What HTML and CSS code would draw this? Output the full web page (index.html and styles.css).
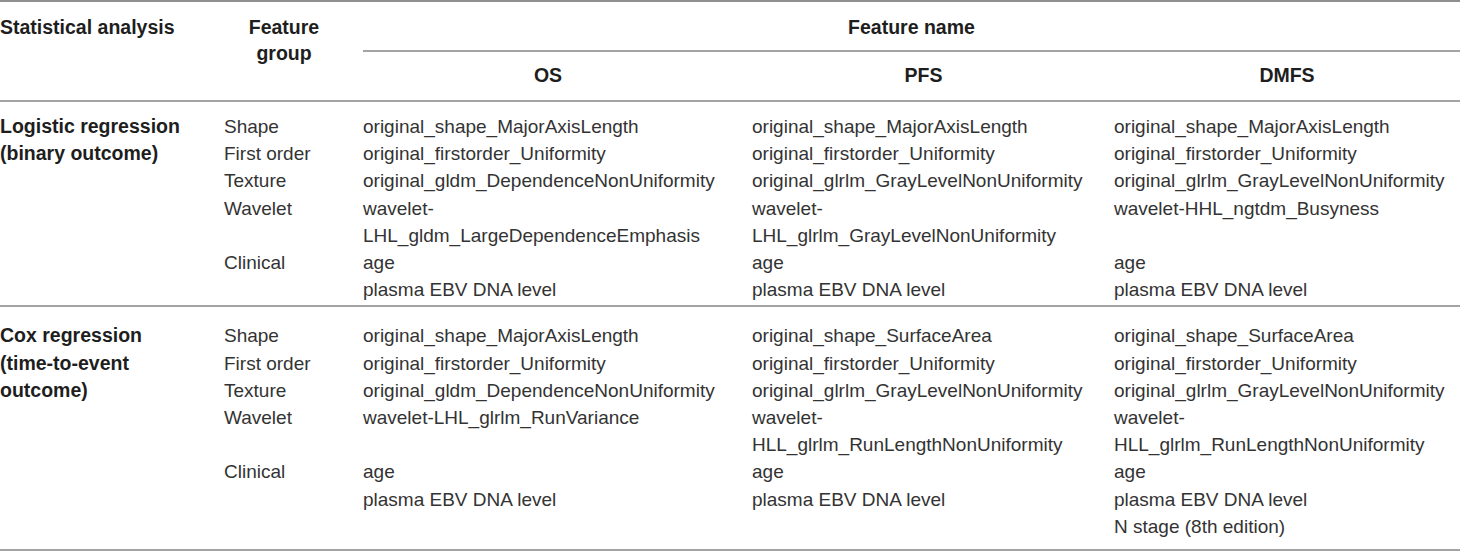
FILE: index.html
```html
<!DOCTYPE html>
<html lang="en">
<head>
<meta charset="utf-8">
<title>Radiomic features table</title>
<link rel="stylesheet" href="styles.css">
</head>
<body>
<table class="tbl">
  <colgroup>
    <col class="c1"><col class="c2"><col class="c3"><col class="c4"><col class="c5">
  </colgroup>
  <thead>
    <tr>
      <th class="h-stat" rowspan="2">Statistical analysis</th>
      <th class="h-group" rowspan="2">Feature<br>group</th>
      <th class="h-name" colspan="3">Feature name</th>
    </tr>
    <tr>
      <th class="h-sub">OS</th>
      <th class="h-sub">PFS</th>
      <th class="h-sub last">DMFS</th>
    </tr>
  </thead>
  <tbody>
    <tr class="g1">
      <td class="lbl">Logistic regression<br>(binary outcome)</td>
      <td>Shape<br>First order<br>Texture<br>Wavelet<br><br>Clinical</td>
      <td>original_shape_MajorAxisLength<br>original_firstorder_Uniformity<br>original_gldm_DependenceNonUniformity<br>wavelet-<br>LHL_gldm_LargeDependenceEmphasis<br>age<br>plasma EBV DNA level</td>
      <td>original_shape_MajorAxisLength<br>original_firstorder_Uniformity<br>original_glrlm_GrayLevelNonUniformity<br>wavelet-<br>LHL_glrlm_GrayLevelNonUniformity<br>age<br>plasma EBV DNA level</td>
      <td class="last">original_shape_MajorAxisLength<br>original_firstorder_Uniformity<br>original_glrlm_GrayLevelNonUniformity<br>wavelet-HHL_ngtdm_Busyness<br><br>age<br>plasma EBV DNA level</td>
    </tr>
    <tr class="g2">
      <td class="lbl">Cox regression<br>(time-to-event<br>outcome)</td>
      <td>Shape<br>First order<br>Texture<br>Wavelet<br><br>Clinical</td>
      <td>original_shape_MajorAxisLength<br>original_firstorder_Uniformity<br>original_gldm_DependenceNonUniformity<br>wavelet-LHL_glrlm_RunVariance<br><br>age<br>plasma EBV DNA level</td>
      <td>original_shape_SurfaceArea<br>original_firstorder_Uniformity<br>original_glrlm_GrayLevelNonUniformity<br>wavelet-<br>HLL_glrlm_RunLengthNonUniformity<br>age<br>plasma EBV DNA level</td>
      <td class="last">original_shape_SurfaceArea<br>original_firstorder_Uniformity<br>original_glrlm_GrayLevelNonUniformity<br>wavelet-<br>HLL_glrlm_RunLengthNonUniformity<br>age<br>plasma EBV DNA level<br>N stage (8th edition)</td>
    </tr>
  </tbody>
</table>
</body>
</html>
```

FILE: styles.css
```css
html, body {
  margin: 0;
  padding: 0;
  background: #ffffff;
}

body {
  font-family: "Liberation Sans", Arial, Helvetica, sans-serif;
}

.tbl {
  width: 1460px;
  table-layout: fixed;
  border-collapse: separate;
  border-spacing: 0;
}

.c1 { width: 224px; }
.c2 { width: 139px; }
.c3 { width: 389px; }
.c4 { width: 362px; }
.c5 { width: 346px; }

.tbl th,
.tbl td {
  padding: 0 19px 0 0;
  white-space: nowrap;
}

.tbl th {
  font-size: 19.5px;
  font-weight: bold;
  line-height: 26px;
  color: #1e1e1e;
}

.tbl .last {
  padding-right: 0;
}

.h-stat,
.h-group {
  vertical-align: top;
  border-top: 2px solid #8f8f8f;
  border-bottom: 2px solid #a3a3a3;
  padding-top: 12px !important;
}

.h-stat {
  text-align: left;
}

.h-group {
  text-align: center;
}

.h-name {
  text-align: center;
  vertical-align: top;
  border-top: 2px solid #8f8f8f;
  border-bottom: 2px solid #a3a3a3;
  padding-top: 12px !important;
  padding-bottom: 10px !important;
  padding-right: 0 !important;
}

.h-sub {
  text-align: center;
  vertical-align: top;
  border-bottom: 2px solid #a3a3a3;
  padding-top: 10px !important;
  padding-bottom: 12px !important;
}

.tbl td {
  font-size: 19px;
  line-height: 27.2px;
  color: #333333;
  vertical-align: top;
  text-align: left;
}

.tbl td.lbl {
  font-size: 19.5px;
  font-weight: bold;
  color: #1e1e1e;
}

.g1 td {
  padding-top: 11px;
  padding-bottom: 2px;
  border-bottom: 2px solid #a3a3a3;
}

.g2 td {
  padding-top: 15px;
  padding-bottom: 9px;
  border-bottom: 2px solid #a3a3a3;
}
```
